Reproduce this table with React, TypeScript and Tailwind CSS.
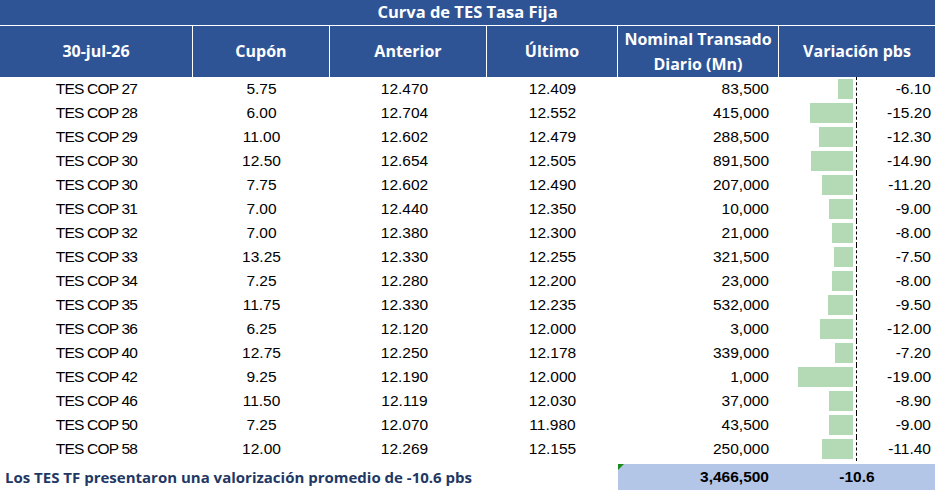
import React from "react";

type Row = {
  name: string;
  cupon: string;
  anterior: string;
  ultimo: string;
  nominal: string;
  variacion: number;
};

const rows: Row[] = [
  { name: "TES COP 27", cupon: "5.75", anterior: "12.470", ultimo: "12.409", nominal: "83,500", variacion: -6.1 },
  { name: "TES COP 28", cupon: "6.00", anterior: "12.704", ultimo: "12.552", nominal: "415,000", variacion: -15.2 },
  { name: "TES COP 29", cupon: "11.00", anterior: "12.602", ultimo: "12.479", nominal: "288,500", variacion: -12.3 },
  { name: "TES COP 30", cupon: "12.50", anterior: "12.654", ultimo: "12.505", nominal: "891,500", variacion: -14.9 },
  { name: "TES COP 30", cupon: "7.75", anterior: "12.602", ultimo: "12.490", nominal: "207,000", variacion: -11.2 },
  { name: "TES COP 31", cupon: "7.00", anterior: "12.440", ultimo: "12.350", nominal: "10,000", variacion: -9.0 },
  { name: "TES COP 32", cupon: "7.00", anterior: "12.380", ultimo: "12.300", nominal: "21,000", variacion: -8.0 },
  { name: "TES COP 33", cupon: "13.25", anterior: "12.330", ultimo: "12.255", nominal: "321,500", variacion: -7.5 },
  { name: "TES COP 34", cupon: "7.25", anterior: "12.280", ultimo: "12.200", nominal: "23,000", variacion: -8.0 },
  { name: "TES COP 35", cupon: "11.75", anterior: "12.330", ultimo: "12.235", nominal: "532,000", variacion: -9.5 },
  { name: "TES COP 36", cupon: "6.25", anterior: "12.120", ultimo: "12.000", nominal: "3,000", variacion: -12.0 },
  { name: "TES COP 40", cupon: "12.75", anterior: "12.250", ultimo: "12.178", nominal: "339,000", variacion: -7.2 },
  { name: "TES COP 42", cupon: "9.25", anterior: "12.190", ultimo: "12.000", nominal: "1,000", variacion: -19.0 },
  { name: "TES COP 46", cupon: "11.50", anterior: "12.119", ultimo: "12.030", nominal: "37,000", variacion: -8.9 },
  { name: "TES COP 50", cupon: "7.25", anterior: "12.070", ultimo: "11.980", nominal: "43,500", variacion: -9.0 },
  { name: "TES COP 58", cupon: "12.00", anterior: "12.269", ultimo: "12.155", nominal: "250,000", variacion: -11.4 },
];

const cols = "grid grid-cols-[193px_137px_157px_131px_161px_156px]";
const head = "font-['Open_Sans',sans-serif] font-bold text-white";

const App: React.FC = () => {
  return (
    <div className="w-[935px] h-[490px] bg-white overflow-hidden">
      {/* Title */}
      <div className={`${head} h-[26px] bg-[#2f5496] border-b border-white flex items-center justify-center text-[16.5px]`}>
        Curva de TES Tasa Fija
      </div>

      {/* Header */}
      <div className={`${cols} ${head} h-[51px] bg-[#2f5496] text-[16px] leading-[25px]`}>
        <div className="flex items-center justify-center border-r border-white">30-jul-26</div>
        <div className="flex items-center justify-center border-r border-white">Cupón</div>
        <div className="flex items-center justify-center border-r border-white">Anterior</div>
        <div className="flex items-center justify-center border-r border-white">Último</div>
        <div className="flex items-center justify-center text-center border-r border-white">
          Nominal Transado
          <br />
          Diario (Mn)
        </div>
        <div className="flex items-center justify-center">Variación pbs</div>
      </div>

      {/* Rows */}
      <div className="font-['Liberation_Sans',Arial,sans-serif] text-[15.5px] text-black">
        {rows.map((r, i) => {
          const w = Math.max(0, 3.1 * Math.abs(r.variacion) - 4);
          return (
            <div key={i} className={`${cols} h-[24px] items-center`}>
              <div className="text-center tracking-[-0.8px]">{r.name}</div>
              <div className="text-center">{r.cupon}</div>
              <div className="text-center pr-[8px]">{r.anterior}</div>
              <div className="text-center">{r.ultimo}</div>
              <div className="text-right pr-[10px]">{r.nominal}</div>
              <div className="flex h-full">
                <div className="w-[78px] h-full flex items-center justify-end border-r border-dashed border-black pr-[3px]">
                  <div className="h-[20px] bg-[#b3dab5]" style={{ width: `${w}px` }} />
                </div>
                <div className="flex-1 flex items-center justify-end pr-[4px]">
                  {r.variacion.toFixed(2)}
                </div>
              </div>
            </div>
          );
        })}
      </div>

      {/* Footer */}
      <div className={`${cols} h-[29px] pt-[3px]`}>
        <div className="col-span-4 flex items-center pl-[5px] whitespace-nowrap font-['Open_Sans',sans-serif] font-bold text-[15px] text-[#1f3864]">
          Los TES TF presentaron una valorización promedio de -10.6 pbs
        </div>
        <div className="relative bg-[#b4c6e7] flex items-center justify-end pr-[10px] font-['Liberation_Sans',Arial,sans-serif] font-bold text-[15.5px] text-black">
          <span className="absolute left-0 top-0 w-0 h-0 border-t-[6px] border-r-[6px] border-t-[#1a8a1a] border-r-transparent" />
          3,466,500
        </div>
        <div className="bg-[#b4c6e7] flex items-center justify-center font-['Liberation_Sans',Arial,sans-serif] font-bold text-[15.5px] text-black">
          -10.6
        </div>
      </div>
    </div>
  );
};

export default App;
